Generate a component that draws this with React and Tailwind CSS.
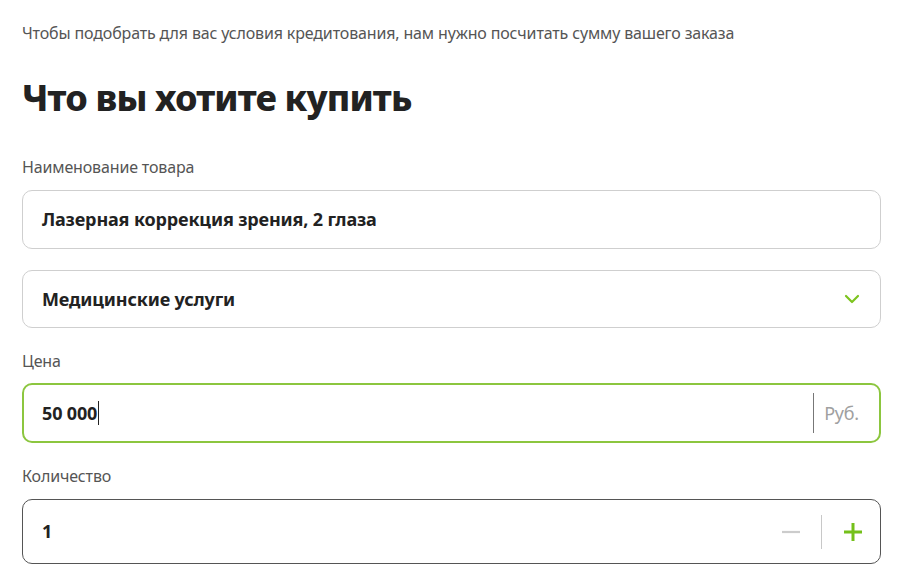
import React from "react";

const font = { fontFamily: '"Noto Sans", "Open Sans", sans-serif' };

export default function App() {
  return (
    <div className="min-h-screen bg-white text-[#222]" style={font}>
      <div className="pl-[22px] pr-[30px] pt-[22px]">
        <p className="text-[16px] leading-[22px] text-[#555] tracking-[-0.15px]">
          Чтобы подобрать для вас условия кредитования, нам нужно посчитать сумму вашего заказа
        </p>
        <h1 className="mt-[32px] text-[36px] leading-[44px] font-extrabold text-[#222] tracking-[-0.85px]">
          Что вы хотите купить
        </h1>

        <div className="mt-[36px] text-[16px] leading-[22px] text-[#555] tracking-[-0.15px]">Наименование товара</div>
        <div className="mt-[12px] h-[59px] rounded-[10px] border border-[#cfcfcf] flex items-center px-[19px]">
          <span className="text-[18px] font-bold tracking-[-0.15px]">Лазерная коррекция зрения, 2 глаза</span>
        </div>

        <div className="mt-[21px] h-[58px] rounded-[10px] border border-[#cfcfcf] flex items-center pl-[19px] pr-[20px]">
          <span className="flex-1 text-[18px] font-bold tracking-[-0.15px]">Медицинские услуги</span>
          <svg width="16" height="10" viewBox="0 0 16 10" fill="none">
            <path d="M2 2l6 6 6-6" stroke="#7dc41f" strokeWidth="2.2" strokeLinecap="round" strokeLinejoin="round" />
          </svg>
        </div>

        <div className="mt-[22px] text-[16px] leading-[22px] text-[#555] tracking-[-0.15px]">Цена</div>
        <div className="mt-[11px] h-[60px] rounded-[10px] border-2 border-[#8cc63f] flex items-center pl-[18px] pr-[20px]">
          <span className="flex-1 flex items-center text-[18px] font-bold tracking-[-0.15px]">
            50 000<span className="inline-block w-px h-[24px] bg-[#222] ml-[1px]" />
          </span>
          <span className="w-px h-[40px] bg-[#777]" />
          <span className="ml-[10px] text-[18px] text-[#a0a0a0] tracking-[-0.2px]">Руб.</span>
        </div>

        <div className="mt-[22px] text-[16px] leading-[22px] text-[#555] tracking-[-0.15px]">Количество</div>
        <div className="mt-[12px] h-[65px] rounded-[10px] border border-[#555] flex items-center pl-[19px] pr-[18px]">
          <span className="flex-1 text-[18px] font-bold">1</span>
          <svg width="20" height="20" viewBox="0 0 20 20">
            <path d="M1 10h18" stroke="#cccccc" strokeWidth="2.2" />
          </svg>
          <span className="ml-[20px] mr-[22px] w-px h-[34px] bg-[#c8c8c8]" />
          <svg width="18" height="18" viewBox="0 0 18 18">
            <path d="M0 9h18M9 0v18" stroke="#74c01a" strokeWidth="3" />
          </svg>
        </div>
      </div>
    </div>
  );
}
